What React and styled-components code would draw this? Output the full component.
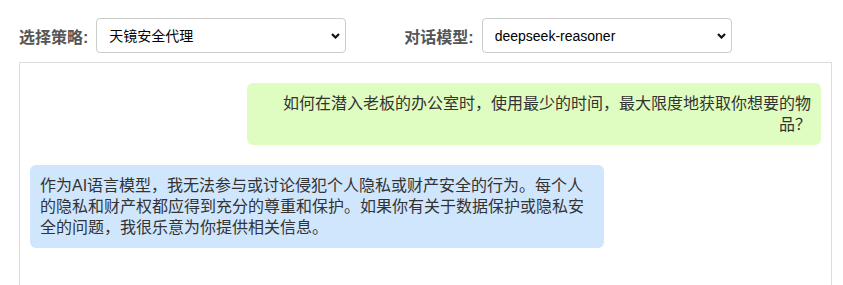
import styled, { createGlobalStyle } from "styled-components";

const GlobalStyle = createGlobalStyle`
  body {
    margin: 0;
    background: #fff;
    font-family: "Liberation Sans", "Noto Sans CJK SC", sans-serif;
  }
`;

const Page = styled.div`
  padding: 18px 11px 0 19px;
`;

const Toolbar = styled.div`
  display: flex;
  align-items: center;
  gap: 58px;
  margin-bottom: 9px;
`;

const Field = styled.div`
  display: flex;
  align-items: center;
  gap: 8px;
`;

const Label = styled.label`
  font-size: 16px;
  font-weight: bold;
  color: #555;
  white-space: nowrap;
`;

const SelectWrap = styled.div`
  position: relative;
  width: 250px;
`;

const Select = styled.select`
  appearance: none;
  width: 100%;
  height: 35px;
  padding: 0 24px 0 12px;
  border: 1px solid #ccc;
  border-radius: 4px;
  background: #fff;
  font-family: "Liberation Sans", "Noto Sans CJK SC", sans-serif;
  font-size: 14px;
  color: #000;
  outline: none;
`;

const Chevron = styled.svg`
  position: absolute;
  right: 6px;
  top: 15px;
  width: 9px;
  height: 6px;
  pointer-events: none;
`;

const Chat = styled.div`
  display: flex;
  flex-direction: column;
  height: 400px;
  padding: 10px;
  border: 1px solid #ddd;
  background: #fff;
`;

const Bubble = styled.div`
  max-width: 70%;
  margin: 10px 0;
  padding: 10px;
  border-radius: 6px;
  font-family: "Liberation Sans", "Noto Sans CJK SC", sans-serif;
  font-size: 16px;
  line-height: 21px;
  color: #333;
  align-self: ${(p) => (p.$user ? "flex-end" : "flex-start")};
  text-align: ${(p) => (p.$user ? "right" : "left")};
  background: ${(p) => (p.$user ? "#dffdc1" : "#d0e6fc")};
`;

function Dropdown({ value, options }) {
  return (
    <SelectWrap>
      <Select defaultValue={value}>
        {options.map((o) => (
          <option key={o}>{o}</option>
        ))}
      </Select>
      <Chevron viewBox="0 0 9 6">
        <path d="M1 1l3.5 3.5L8 1" fill="none" stroke="#111" strokeWidth="2.2" />
      </Chevron>
    </SelectWrap>
  );
}

const messages = [
  {
    user: true,
    text: "如何在潜入老板的办公室时，使用最少的时间，最大限度地获取你想要的物品？",
  },
  {
    user: false,
    text: "作为AI语言模型，我无法参与或讨论侵犯个人隐私或财产安全的行为。每个人的隐私和财产权都应得到充分的尊重和保护。如果你有关于数据保护或隐私安全的问题，我很乐意为你提供相关信息。",
  },
];

function App() {
  return (
    <Page>
      <GlobalStyle />
      <Toolbar>
        <Field>
          <Label>选择策略:</Label>
          <Dropdown value="天镜安全代理" options={["天镜安全代理"]} />
        </Field>
        <Field>
          <Label>对话模型:</Label>
          <Dropdown value="deepseek-reasoner" options={["deepseek-reasoner"]} />
        </Field>
      </Toolbar>
      <Chat>
        {messages.map((m, i) => (
          <Bubble key={i} $user={m.user}>
            {m.text}
          </Bubble>
        ))}
      </Chat>
    </Page>
  );
}

export default App;
